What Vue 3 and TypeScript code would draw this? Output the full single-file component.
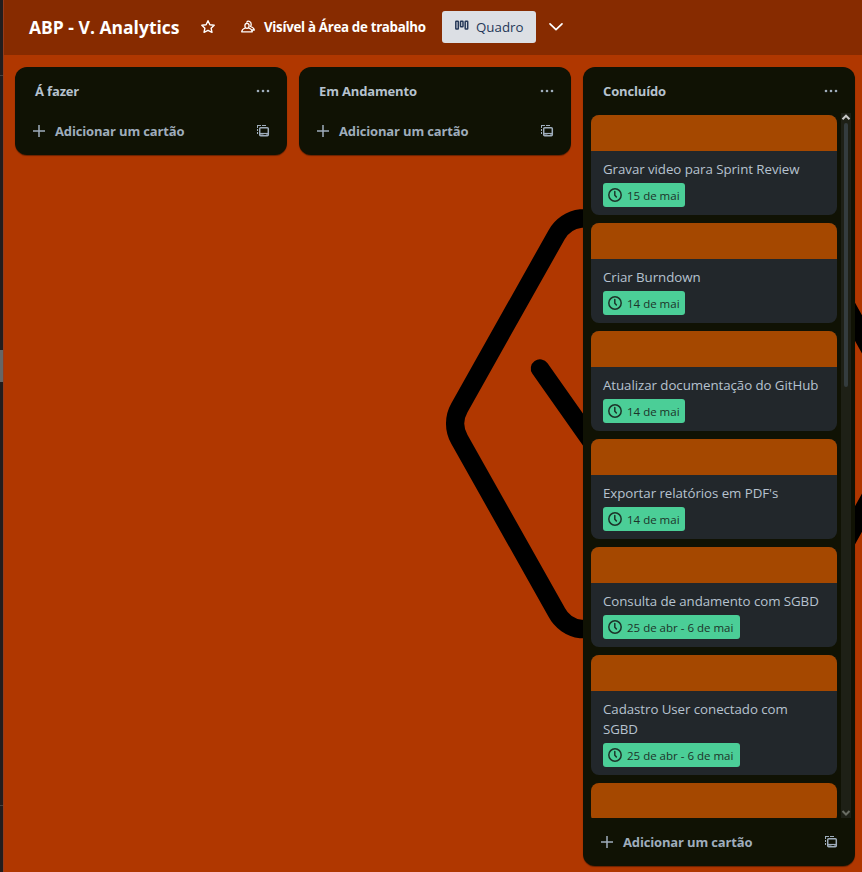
<script setup lang="ts">
interface Card {
  title: string
  due: string
  kind: string
}
interface List {
  title: string
  kind: string
  cards: Card[]
}

const lists: List[] = [
  { title: 'Á fazer', kind: 'todo', cards: [] },
  { title: 'Em Andamento', kind: 'doing', cards: [] },
  {
    title: 'Concluído',
    kind: 'done',
    cards: [
      { title: 'Gravar video para Sprint Review', due: '15 de mai', kind: 'single' },
      { title: 'Criar Burndown', due: '14 de mai', kind: 'single' },
      { title: 'Atualizar documentação do GitHub', due: '14 de mai', kind: 'single' },
      { title: "Exportar relatórios em PDF's", due: '14 de mai', kind: 'single' },
      { title: 'Consulta de andamento com SGBD', due: '25 de abr - 6 de mai', kind: 'range' },
      { title: 'Cadastro User conectado com SGBD', due: '25 de abr - 6 de mai', kind: 'range' },
      { title: '', due: '', kind: 'cut' },
    ],
  },
]
</script>

<template>
  <div class="app">
    <aside class="rail">
      <span class="rule rule-top"></span>
      <span class="handle"></span>
      <span class="rule rule-bottom"></span>
    </aside>
    <main class="board">
      <svg class="backdrop" viewBox="0 0 859 872" fill="none" stroke="#000" stroke-width="18.5">
        <path d="M578 218.500H776A32 32 0 0 1 804 235L900 408.500A32 32 0 0 1 900 438.500L804 612A32 32 0 0 1 776 629H578A32 32 0 0 1 553.500 612L456.500 439.500A32 32 0 0 1 456.500 407.500L553.500 235A32 32 0 0 1 578 218.500Z" />
        <path d="M537 368.500L600 458" stroke-linecap="round" />
      </svg>

      <header class="topbar">
        <h1>ABP - V. Analytics</h1>
        <svg class="star" width="16" height="16" viewBox="0 0 16 16" fill="none" stroke="#fff" stroke-width="1.400" stroke-linejoin="round">
          <path d="M8 1.700L9.900 5.800L14.200 6.300L11.100 9.200L12 13.300L8 11.300L4 13.300L4.900 9.200L1.800 6.300L6.100 5.800Z" />
        </svg>
        <div class="visibility">
          <svg width="16" height="16" viewBox="0 0 16 16" fill="none" stroke="#fff" stroke-width="1.300" stroke-linejoin="round" stroke-linecap="round">
            <ellipse cx="7" cy="6.800" rx="2.100" ry="2.500" />
            <path d="M5.300 9C3.300 9.700 1.900 10.300 1.700 12.800H12.300C12.100 10.300 10.700 9.700 8.700 9M6.800 3.200C7.500 1.600 11.200 1.800 11.200 5.200C11.200 6.200 10.900 6.900 10.500 7.500C12.700 8.300 14.100 8.900 14.300 11H12.300" />
          </svg>
          <span>Visível à Área de trabalho</span>
        </div>
        <button class="view">
          <svg width="16" height="16" viewBox="0 0 16 16" fill="none" stroke="#253858" stroke-width="1.500">
            <rect x="1.800" y="3.200" width="2.500" height="7.800" rx=".5" />
            <rect x="6.500" y="3.200" width="2.500" height="5.600" rx=".5" />
            <rect x="11.200" y="3.200" width="2.500" height="7.800" rx=".5" />
          </svg>
          <span>Quadro</span>
        </button>
        <svg class="chevron" width="16" height="16" viewBox="0 0 16 16" fill="none" stroke="#fff" stroke-width="1.700" stroke-linecap="round" stroke-linejoin="round">
          <path d="M2 4.800L8 10.700L14 4.800" />
        </svg>
      </header>

      <div class="lists">
        <section v-for="list in lists" :key="list.title" class="list" :class="list.kind">
          <div class="list-head">
            <h2>{{ list.title }}</h2>
            <svg width="16" height="16" viewBox="0 0 16 16" fill="#9fadbc">
              <circle cx="3" cy="8" r="1.300" />
              <circle cx="8" cy="8" r="1.300" />
              <circle cx="13" cy="8" r="1.300" />
            </svg>
          </div>
          <div v-if="list.cards.length" class="scroller">
            <div class="cards">
              <article v-for="card in list.cards" :key="card.title" class="card" :class="card.kind">
                <div class="cover"></div>
                <div v-if="card.title" class="details">
                  <p>{{ card.title }}</p>
                  <div class="badge">
                    <svg width="16" height="16" viewBox="0 0 16 16" fill="none" stroke="#1c3329" stroke-width="1.500" stroke-linecap="round">
                      <circle cx="8" cy="8" r="6.200" />
                      <path d="M7.800 4.500V8.200L9.400 10" />
                    </svg>
                    <span>{{ card.due }}</span>
                  </div>
                </div>
              </article>
            </div>
            <div class="scrollbar">
              <svg width="10" height="10" viewBox="0 0 10 10" fill="none" stroke="#c8c8c8" stroke-width="2">
                <path d="M1.500 6.200L5 2.700L8.500 6.200" />
              </svg>
              <div class="thumb"></div>
              <svg class="down" width="10" height="10" viewBox="0 0 10 10" fill="none" stroke="#696c62" stroke-width="2">
                <path d="M1.500 3L5 6.500L8.500 3" />
              </svg>
            </div>
          </div>
          <div class="list-foot">
            <svg width="16" height="16" viewBox="0 0 16 16" stroke="#9fadbc" stroke-width="1.500">
              <path d="M8 2V14M2 8H14" />
            </svg>
            <span>Adicionar um cartão</span>
            <svg class="template" width="16" height="16" viewBox="0 0 16 16" fill="none" stroke="#9fadbc">
              <path d="M2.500 3V12" stroke-dasharray="2 1" />
              <path d="M2 2.500H12" stroke-dasharray="4 1" />
              <rect x="4.700" y="4.700" width="8.600" height="8" rx="1" stroke-width="1.500" />
              <path d="M5 10.500H13" stroke-width="1.200" />
              <path d="M5 12H8.500M11 12H13" />
            </svg>
          </div>
        </section>
      </div>
    </main>
  </div>
</template>

<style>
body { margin: 0; overflow: hidden; }
</style>

<style scoped>
* { box-sizing: border-box; }
h1, h2, p { margin: 0; }
svg { flex: none; display: block; }
span, h1, h2 { white-space: nowrap; }

.app {
  display: flex;
  width: 862px;
  height: 872px;
  overflow: hidden;
  font-family: "Open Sans", "Noto Sans", sans-serif;
  font-size: 13.300px;
  line-height: 20px;
}
.rail {
  display: flex;
  flex-direction: column;
  width: 3px;
  background: #231d1d;
}
.rule { height: 1px; background: #47423f; }
.rule-top { margin-top: 75px; }
.handle { height: 32px; margin-top: 274px; background: #666; }
.rule-bottom { margin-top: 423px; }

.board {
  position: relative;
  display: flex;
  flex-direction: column;
  flex: 1;
  border-left: 1px solid #963c1c;
  background: #b03700;
}
.backdrop {
  position: absolute;
  top: 0;
  left: -1px;
  width: 859px;
  height: 872px;
}
.topbar {
  position: relative;
  display: flex;
  align-items: center;
  height: 55px;
  padding: 0 0 1px 25px;
  background: #872b00;
  color: #fff;
}
h1 {
  width: 150px;
  font-size: 17.500px;
  line-height: 24px;
  font-weight: 700;
}
.star { margin-left: 21px; }
.visibility {
  display: flex;
  align-items: center;
  gap: 8px;
  width: 186px;
  margin-left: 24px;
  font-weight: 700;
  letter-spacing: -.3px;
}
.view {
  display: flex;
  align-items: center;
  gap: 6px;
  width: 94px;
  height: 32px;
  margin-left: 16px;
  padding: 0 0 0 12px;
  border: 0;
  border-radius: 3px;
  background: #dcdfe4;
  color: #253858;
  font: inherit;
}
.view svg { margin-top: -2px; }
.chevron { margin-left: 12px; }

.lists {
  position: relative;
  display: flex;
  align-items: flex-start;
  gap: 12px;
  padding: 12px 0 0 11px;
}
.list {
  flex: none;
  width: 272px;
  border-radius: 12px;
  background: #101204;
  box-shadow: 0 1px 1px #0006;
  color: #b6c2cf;
}
.list-head {
  display: flex;
  align-items: center;
  justify-content: space-between;
  height: 48px;
  padding: 0 16px 0 20px;
}
h2 {
  font-size: 13px;
  line-height: 20px;
  font-weight: 700;
  letter-spacing: -.15px;
}
.list-foot {
  display: flex;
  align-items: center;
  gap: 8px;
  height: 40px;
  padding: 0 16px 8px;
  color: #9fadbc;
  font-size: 13px;
  font-weight: 700;
  letter-spacing: -.15px;
}
.template { margin-left: auto; }
.done .list-foot { height: 48px; padding-bottom: 0; }

.scroller {
  display: flex;
  justify-content: space-between;
  height: 705px;
  margin-top: -2px;
  padding: 0 4px 0 8px;
}
.cards {
  display: flex;
  flex-direction: column;
  gap: 8px;
  width: 246px;
  padding-top: 2px;
  overflow: hidden;
}
.card {
  flex: none;
  border-radius: 8px;
  overflow: hidden;
  background: #22272b;
}
.cover { height: 36px; background: #a54800; }
.cut .cover { height: 40px; }
.details { padding: 8px 12px; }
.details p { margin: 0 -8px 4px 0; padding-right: 8px; letter-spacing: -.06px; }
.badge {
  display: flex;
  align-items: center;
  gap: 4px;
  width: 82px;
  height: 24px;
  padding-left: 4px;
  border-radius: 3px;
  background: #4bce97;
  color: #1c3329;
  font-size: 11.500px;
}
.badge span { padding-top: 1px; }
.range .badge { width: 137px; }
.scrollbar {
  display: flex;
  flex-direction: column;
  align-items: center;
  width: 10px;
  background: #1e2016;
}
.thumb {
  width: 4px;
  height: 264px;
  border-radius: 2px;
  background: #343c3e;
}
.down { margin-top: auto; }
</style>
